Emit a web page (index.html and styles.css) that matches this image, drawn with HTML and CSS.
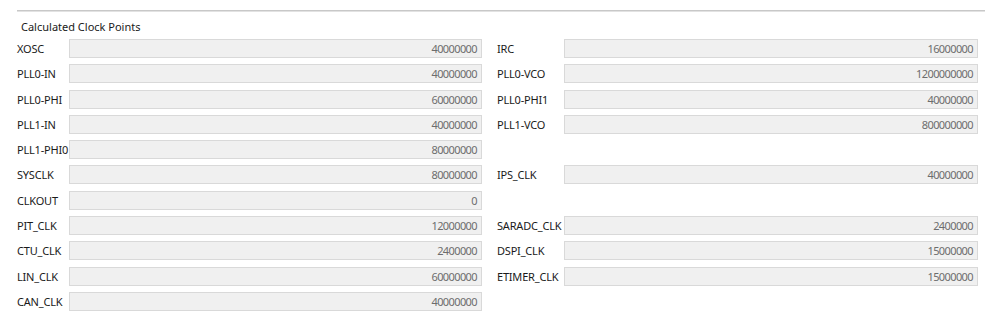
FILE: index.html
```html
<!DOCTYPE html>
<html>
<head>
<meta charset="utf-8">
<link rel="stylesheet" href="styles.css">
</head>
<body>
<div class="panel">
  <div class="rule"></div>
  <div class="title">Calculated Clock Points</div>
  <div class="grid">
    <div class="lbl">XOSC</div><div class="fld">40000000</div>
    <div class="lbl r">IRC</div><div class="fld">16000000</div>

    <div class="lbl">PLL0-IN</div><div class="fld">40000000</div>
    <div class="lbl r">PLL0-VCO</div><div class="fld">1200000000</div>

    <div class="lbl">PLL0-PHI</div><div class="fld">60000000</div>
    <div class="lbl r">PLL0-PHI1</div><div class="fld">40000000</div>

    <div class="lbl">PLL1-IN</div><div class="fld">40000000</div>
    <div class="lbl r">PLL1-VCO</div><div class="fld">800000000</div>

    <div class="lbl">PLL1-PHI0</div><div class="fld">80000000</div>
    <div class="empty"></div><div class="empty"></div>

    <div class="lbl">SYSCLK</div><div class="fld">80000000</div>
    <div class="lbl r">IPS_CLK</div><div class="fld">40000000</div>

    <div class="lbl">CLKOUT</div><div class="fld">0</div>
    <div class="empty"></div><div class="empty"></div>

    <div class="lbl">PIT_CLK</div><div class="fld">12000000</div>
    <div class="lbl r">SARADC_CLK</div><div class="fld">2400000</div>

    <div class="lbl">CTU_CLK</div><div class="fld">2400000</div>
    <div class="lbl r">DSPI_CLK</div><div class="fld">15000000</div>

    <div class="lbl">LIN_CLK</div><div class="fld">60000000</div>
    <div class="lbl r">ETIMER_CLK</div><div class="fld">15000000</div>

    <div class="lbl">CAN_CLK</div><div class="fld">40000000</div>
    <div class="empty"></div><div class="empty"></div>
  </div>
</div>
</body>
</html>
```
FILE: styles.css
```css
html, body {
  margin: 0;
  padding: 0;
  background: #ffffff;
}
body {
  font-family: "Noto Sans", "Open Sans", "DejaVu Sans", sans-serif;
  font-size: 11px;
  color: #1a1a1a;
}
.panel {
  padding: 10px 13px 0 17px;
}
.rule {
  height: 1px;
  background: #c8c8c8;
  border-bottom: 1px solid #e2e2e2;
}
.title {
  margin-top: 6px;
  padding-left: 4px;
  height: 17px;
  line-height: 17px;
}
.grid {
  display: grid;
  grid-template-columns: 52px 413px 82px 414px;
  grid-auto-rows: 25.3px;
  margin-top: 4px;
}
.lbl {
  height: 19px;
  line-height: 19px;
  white-space: nowrap;
  letter-spacing: -0.2px;
}
.lbl.r {
  padding-left: 15px;
}
.fld {
  box-sizing: border-box;
  height: 19px;
  line-height: 17px;
  background: #f0f0f0;
  border: 1px solid #d9d9d9;
  color: #6d6d6d;
  text-align: right;
  padding-right: 4px;
  letter-spacing: -0.6px;
}
```
